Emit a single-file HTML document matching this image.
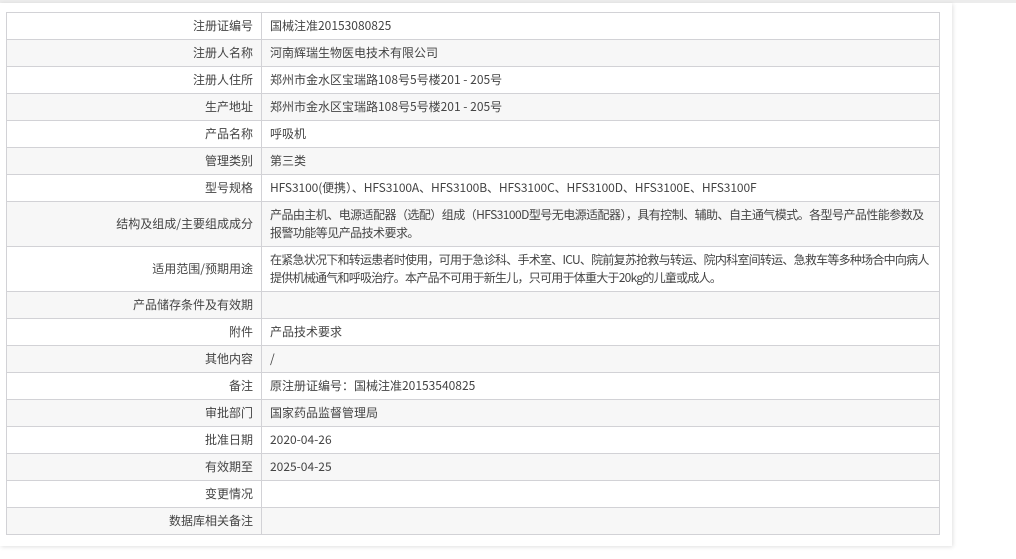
<!DOCTYPE html>
<html><head><meta charset="utf-8"><style>
body{margin:0;background:#fff;width:1016px;height:559px;overflow:hidden;font-family:"Noto Sans CJK SC","Liberation Sans",sans-serif;}
.top{position:absolute;left:0;top:0;width:1016px;height:3px;background:#ececec;}
.panel{position:absolute;left:0;top:3px;width:952px;height:543px;background:#fff;box-shadow:1px 1px 4px rgba(0,0,0,0.12);}
table{position:absolute;left:6px;top:12px;width:934px;border-collapse:collapse;table-layout:fixed;font-size:12px;color:#444;}
td{border:1px solid #d2d2d6;height:26px;padding:0 8px;vertical-align:middle;line-height:18px;white-space:nowrap;overflow:hidden;}
td.l{text-align:right;}
tr:nth-child(even) td{background:#f7f7f7;}
tr.t td{height:44px;}
</style></head><body>
<div class="top"></div>
<div class="panel"></div>
<table>
<colgroup><col style="width:255px"><col></colgroup>
<tr><td class="l">注册证编号</td><td>国械注准20153080825</td></tr>
<tr><td class="l">注册人名称</td><td>河南辉瑞生物医电技术有限公司</td></tr>
<tr><td class="l">注册人住所</td><td>郑州市金水区宝瑞路108号5号楼201 - 205号</td></tr>
<tr><td class="l">生产地址</td><td>郑州市金水区宝瑞路108号5号楼201 - 205号</td></tr>
<tr><td class="l">产品名称</td><td>呼吸机</td></tr>
<tr><td class="l">管理类别</td><td>第三类</td></tr>
<tr><td class="l">型号规格</td><td style="letter-spacing:-0.1px">HFS3100(便携）、HFS3100A、HFS3100B、HFS3100C、HFS3100D、HFS3100E、HFS3100F</td></tr>
<tr class="t"><td class="l">结构及组成/主要组成成分</td><td style="letter-spacing:-0.55px">产品由主机、电源适配器（选配）组成（HFS3100D型号无电源适配器），具有控制、辅助、自主通气模式。各型号产品性能参数及<br>报警功能等见产品技术要求。</td></tr>
<tr class="t"><td class="l">适用范围/预期用途</td><td style="letter-spacing:-0.75px">在紧急状况下和转运患者时使用，可用于急诊科、手术室、ICU、院前复苏抢救与转运、院内科室间转运、急救车等多种场合中向病人<br>提供机械通气和呼吸治疗。本产品不可用于新生儿，只可用于体重大于20kg的儿童或成人。</td></tr>
<tr><td class="l">产品储存条件及有效期</td><td></td></tr>
<tr><td class="l">附件</td><td>产品技术要求</td></tr>
<tr><td class="l">其他内容</td><td>/</td></tr>
<tr><td class="l">备注</td><td>原注册证编号：国械注准20153540825</td></tr>
<tr><td class="l">审批部门</td><td>国家药品监督管理局</td></tr>
<tr><td class="l">批准日期</td><td>2020-04-26</td></tr>
<tr><td class="l">有效期至</td><td>2025-04-25</td></tr>
<tr><td class="l">变更情况</td><td></td></tr>
<tr><td class="l">数据库相关备注</td><td></td></tr>
</table>
</body></html>
